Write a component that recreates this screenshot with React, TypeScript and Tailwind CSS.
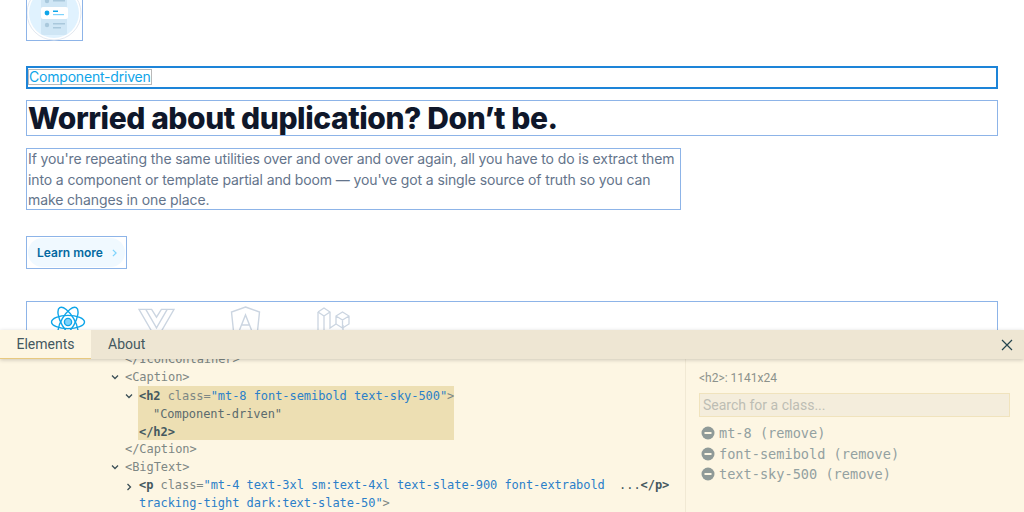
const mono = "font-['DejaVu_Sans_Mono',monospace]";

function Arrow({ open }: { open: boolean }) {
	return (
		<svg
			viewBox="0 0 8 8"
			className={`absolute top-[5px] -left-[14px] h-2 w-2 ${open ? "" : "-rotate-90"}`}
			fill="none"
			stroke="#3b4f56"
			strokeWidth="1.3"
		>
			<path d="M1 2.5 L4 5.5 L7 2.5" />
		</svg>
	);
}

function Row({
	indent,
	arrow,
	children,
}: {
	indent: string;
	arrow?: "open" | "closed";
	children: React.ReactNode;
}) {
	return (
		<div className={`relative h-[18px] leading-[18px] whitespace-pre ${indent}`}>
			{arrow && <Arrow open={arrow === "open"} />}
			{children}
		</div>
	);
}

function ComponentIcon() {
	return (
		<svg viewBox="0 0 56 56" className="block h-[56px] w-[56px]">
			<circle cx="27" cy="28" r="27" fill="#ffffff" stroke="#e2e8f0" strokeWidth="1" />
			<circle cx="27" cy="28" r="25" fill="#e0f2fe" />
			<rect x="14" y="6" width="26" height="44" rx="2" fill="#cfe6f5" />
			<circle cx="20" cy="16" r="2.2" fill="#a9c8dc" />
			<rect x="26" y="15" width="12" height="1.5" fill="#a9c8dc" />
			<circle cx="20" cy="40" r="2.2" fill="#a9c8dc" />
			<rect x="26" y="38" width="12" height="1.5" fill="#a9c8dc" />
			<rect x="26" y="42" width="8" height="1.5" fill="#a9c8dc" />
			<rect x="14" y="22" width="27" height="12" rx="2" fill="#ffffff" />
			<circle cx="20" cy="28" r="2.4" fill="#0ea5e9" />
			<rect x="26" y="25.5" width="5" height="1.5" fill="#0ea5e9" />
			<rect x="26" y="29" width="11" height="1.2" fill="#7dd3fc" />
		</svg>
	);
}

function ReactLogo() {
	return (
		<svg viewBox="0 0 36 32" className="h-[32px] w-[36px]" fill="none" stroke="#0ea5e9" strokeWidth="1.4">
			<circle cx="18" cy="16" r="3.6" fill="#7dd3fc" />
			<ellipse cx="18" cy="16" rx="16.5" ry="6.6" />
			<ellipse cx="18" cy="16" rx="16.5" ry="6.6" transform="rotate(60 18 16)" />
			<ellipse cx="18" cy="16" rx="16.5" ry="6.6" transform="rotate(120 18 16)" />
		</svg>
	);
}

function VueLogo() {
	return (
		<svg viewBox="0 0 38 32" className="mt-[2px] h-[32px] w-[37px]" fill="none" stroke="#cbd5e1" strokeWidth="1.4">
			<path d="M1 1 H14 L19 9 L24 1 H37 L19 32 Z" />
			<path d="M8 1 L19 20 L30 1" />
		</svg>
	);
}

function AngularLogo() {
	return (
		<svg viewBox="0 0 32 32" className="ml-[2px] h-[32px] w-[33px]" fill="none" stroke="#cbd5e1" strokeWidth="1.4">
			<path d="M16 1 L30 6 L28 25 L16 32 L4 25 L2 6 Z" />
			<path d="M10 24 L16 9 L22 24 M12 19 H20" />
		</svg>
	);
}

function LaravelLogo() {
	return (
		<svg viewBox="0 0 33 32" className="mt-[1px] ml-[3px] h-[32px] w-[33px]" fill="none" stroke="#cbd5e1" strokeWidth="1.3">
			<path d="M1 5 L7 1 L13 5 V21 L19 17 M1 5 V25 L14 32 L26 25 V18" />
			<path d="M1 5 L7 9 L13 5 M7 9 V28" />
			<path d="M19 9 L25.5 5 L32 9 V17 L25.5 21 L19 17 Z M19 9 L25.5 13 L32 9 M25.5 13 V21" />
		</svg>
	);
}

function DevTools() {
	const cls = "text-[#2b7fc9]";
	const tag = "text-[#7d8784]";
	return (
		<div className="absolute inset-x-0 top-[330px] bottom-0 flex flex-col bg-[#fdf6e3]">
			<div className="relative z-10 flex h-[29px] shrink-0 items-stretch bg-[#eee6d3] font-['Roboto',sans-serif] text-[14px] text-[#44585f] shadow-[0_1px_4px_rgba(0,0,0,0.2)]">
				<div className="flex w-[91px] items-center justify-center border-b border-[#e8c97f] bg-[#fdf6e3]">Elements</div>
				<div className="flex items-center pl-[17px]">About</div>
				<div className="ml-auto flex items-center pr-[11px]">
					<svg viewBox="0 0 12 12" className="h-3 w-3" fill="none" stroke="#24454f" strokeWidth="1.2">
						<path d="M1 1 L11 11 M11 1 L1 11" />
					</svg>
				</div>
			</div>
			<div className="flex min-h-0 flex-1">
				<div className={`w-[685px] shrink-0 overflow-hidden text-[12px] tracking-[-0.06px] ${mono} ${tag}`}>
					<div className="-mt-[9px] pl-[125px]">
						<Row indent="">{"</IconContainer>"}</Row>
						<Row indent="" arrow="open">{"<Caption>"}</Row>
						<div className="mr-[231px] ml-[13px] h-[54px] bg-[#eddfb3] pt-px pl-[1px]">
							<Row indent="" arrow="open">
								<span className="font-bold text-[#44585f]">{"<h2"}</span> class=<span className={cls}>{'"mt-8 font-semibold text-sky-500"'}</span>
								{">"}
							</Row>
							<Row indent="pl-[14px]">
								<span className="text-[#5c6b6e]">{'"Component-driven"'}</span>
							</Row>
							<Row indent="">
								<span className="font-bold text-[#44585f]">{"</h2>"}</span>
							</Row>
						</div>
						<Row indent="">{"</Caption>"}</Row>
						<Row indent="" arrow="open">{"<BigText>"}</Row>
						<Row indent="pl-[14px]">
							<span className="relative">
								<Arrow open={false} />
								<span className="font-bold text-[#44585f]">{"<p"}</span> class=<span className={cls}>{'"mt-4 text-3xl sm:text-4xl text-slate-900 font-extrabold'}</span>
								<span className="text-[#44585f]">{"  ..."}</span>
								<span className="font-bold text-[#44585f]">{"</p>"}</span>
							</span>
						</Row>
						<Row indent="pl-[14px]">
							<span className={cls}>{'tracking-tight dark:text-slate-50"'}</span>
							{">"}
						</Row>
					</div>
				</div>
				<div className="flex-1 border-l border-[#f1e9d4] pt-[10px] pr-[14px] pl-[13px]">
					<div className="font-['Roboto',sans-serif] text-[12px] leading-[18px] text-[#8c928c]">{"<h2>: 1141x24"}</div>
					<div className="mt-[6px] flex h-6 items-center border border-[#f0e3bd] bg-[#f4eddc] pl-[3px] font-['Roboto',sans-serif] text-[14px] text-[#bdbdb4]">
						Search for a class...
					</div>
					<div className={`mt-[6px] text-[13.6px] leading-[20.5px] text-[#93a1a1] ${mono}`}>
						{["mt-8", "font-semibold", "text-sky-500"].map((name) => (
							<div key={name} className="flex h-[20.5px] items-center gap-[4px] pl-[2px]">
								<svg viewBox="0 0 14 14" className="h-[14px] w-[14px]">
									<circle cx="7" cy="7" r="6.5" fill="#8f9a98" />
									<rect x="3.5" y="6" width="7" height="2" fill="#fdf6e3" />
								</svg>
								<span>{name} (remove)</span>
							</div>
						))}
					</div>
				</div>
			</div>
		</div>
	);
}

export default function App() {
	const outline = "border border-[#8db4e8]";
	return (
		<div className="relative h-[512px] w-[1024px] overflow-hidden bg-white font-['Inter',sans-serif]">
			<div className="-mt-[16px] px-[26px]">
				<div className={`h-[57px] w-[57px] ${outline}`}>
					<ComponentIcon />
				</div>
				<div className="mt-[25px] h-[23px] border-2 border-[#1d84d8] pt-px text-[14px] leading-[14px] text-[#0ea5e9]">
					<span className="inline-block border border-[#b9b9b9] bg-white tracking-[-0.2px]">Component-driven</span>
				</div>
				<div className={`mt-[11px] h-[36px] pl-px text-[30px] leading-[34px] font-extrabold tracking-[-0.42px] whitespace-nowrap text-[#0f172a] ${outline}`}>
					Worried about duplication? Don’t be.
				</div>
				<div className={`mt-[12px] h-[62px] w-[655px] pl-[1px] text-[14px] leading-[20.5px] tracking-[-0.12px] text-[#64748b] ${outline}`}>
					If you're repeating the same utilities over and over and over again, all you have to do is extract them into a component or template partial and boom — you've got a single source of truth so you can make changes in one place.
				</div>
				<div className={`mt-[26px] h-[33px] w-[101px] p-px ${outline}`}>
					<div className="flex h-full items-center rounded-full bg-[#f0f9ff] pl-[9px] text-[12px] font-semibold text-[#0369a1]">
						Learn more
						<svg viewBox="0 0 6 10" className="ml-[9px] h-[8px] w-[5px]" fill="none" stroke="#7dd3fc" strokeWidth="1.5">
							<path d="M1 1 L5 5 L1 9" />
						</svg>
					</div>
				</div>
				<div className={`mt-[32px] flex h-[60px] items-start gap-[52px] pt-[4px] pl-[23px] ${outline}`}>
					<ReactLogo />
					<VueLogo />
					<AngularLogo />
					<LaravelLogo />
				</div>
			</div>
			<DevTools />
		</div>
	);
}
